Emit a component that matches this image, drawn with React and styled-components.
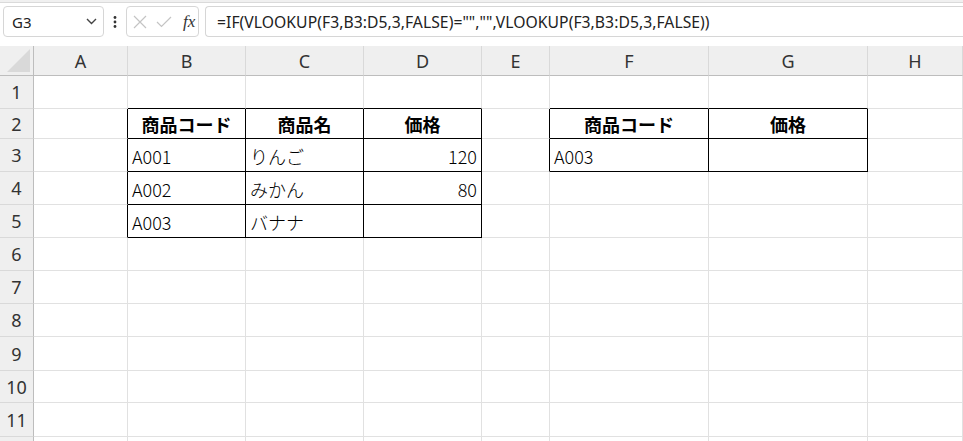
import React from "react";
import styled, { createGlobalStyle } from "styled-components";

const GlobalStyle = createGlobalStyle`
  * { box-sizing: border-box; }
  body {
    margin: 0;
    background: #fff;
    font-family: "Noto Sans", "Liberation Sans", sans-serif;
    overflow: hidden;
  }
`;

const COLS = [
  { key: "", w: "34px" },
  { key: "A", w: "94px" },
  { key: "B", w: "118px" },
  { key: "C", w: "118px" },
  { key: "D", w: "118px" },
  { key: "E", w: "68px" },
  { key: "F", w: "159px" },
  { key: "G", w: "159px" },
  { key: "H", w: "1fr" },
];

// last row is only partly on screen, so its number is left out
const ROWS = [33, 30, 33, 33, 33, 33, 33, 33, 34, 32, 34, 33];
const VISIBLE_LABELS = 11;

const CELLS = {
  B2: { text: "商品コード", head: true },
  C2: { text: "商品名", head: true },
  D2: { text: "価格", head: true },
  B3: { text: "A001" },
  C3: { text: "りんご" },
  D3: { text: "120", num: true },
  B4: { text: "A002" },
  C4: { text: "みかん" },
  D4: { text: "80", num: true },
  B5: { text: "A003" },
  C5: { text: "バナナ" },
  F2: { text: "商品コード", head: true },
  G2: { text: "価格", head: true },
  F3: { text: "A003" },
};

const TABLES = [
  { c1: 2, c2: 4, r1: 2, r2: 5 },
  { c1: 6, c2: 7, r1: 2, r2: 3 },
];

const inTable = (c, r) =>
  TABLES.some((t) => c >= t.c1 && c <= t.c2 && r >= t.r1 && r <= t.r2);

const TopLine = styled.div`
  height: 3px;
  background: #f0f0f0;
  border-bottom: 1px solid #dadada;
`;

const Toolbar = styled.div`
  height: 43px;
  display: flex;
  align-items: flex-start;
  padding: 3px 0 0 3px;
  background: #fff;
`;

const NameBox = styled.div`
  width: 101px;
  height: 31px;
  border: 1px solid #d6d6d6;
  border-radius: 4px;
  background: #fff;
  display: flex;
  align-items: center;
  justify-content: space-between;
  padding: 0 6px 0 8px;
  font-size: 15px;
  color: #222;
`;

const Dots = styled.div`
  width: 22px;
  height: 31px;
  display: flex;
  align-items: center;
  justify-content: center;
`;

const FxBox = styled.div`
  width: 73px;
  height: 31px;
  border: 1px solid #d6d6d6;
  border-radius: 4px;
  background: #fff;
  display: flex;
  align-items: center;
  gap: 9px;
  padding-left: 6px;
`;

const FxLabel = styled.span`
  font-family: "Liberation Serif", "DejaVu Serif", serif;
  font-style: italic;
  font-size: 17px;
  color: #333;
  margin-left: 2px;
`;

const FormulaBox = styled.div`
  flex: 1;
  height: 31px;
  margin-left: 6px;
  border: 1px solid #d6d6d6;
  border-right: none;
  border-radius: 4px 0 0 4px;
  background: #fff;
  display: flex;
  align-items: center;
  padding-left: 11px;
  font-size: 15.7px;
  letter-spacing: 0.05px;
  color: #222;
  white-space: nowrap;
  overflow: hidden;
`;

const Sheet = styled.div`
  display: grid;
  grid-template-columns: ${COLS.map((c) => c.w).join(" ")};
  grid-template-rows: 30px ${ROWS.map((h) => `${h}px`).join(" ")};
  overflow: hidden;
`;

const Corner = styled.div`
  background: #efefef;
  border-right: 1px solid #bdbdbd;
  border-bottom: 1px solid #bdbdbd;
  display: flex;
  align-items: flex-end;
  justify-content: flex-end;
  padding: 0 3px 3px 0;
`;

const ColHead = styled.div`
  background: #efefef;
  border-right: 1px solid #d9d9d9;
  border-bottom: 1px solid #bdbdbd;
  display: flex;
  align-items: center;
  justify-content: center;
  font-size: 18px;
  color: #333;
`;

const RowHead = styled.div`
  background: #efefef;
  border-right: 1px solid #bdbdbd;
  border-bottom: 1px solid #d9d9d9;
  display: flex;
  align-items: center;
  justify-content: center;
  font-size: 18px;
  color: #333;
`;

const Cell = styled.div`
  border-right: 1px solid ${(p) => (p.$rb ? "#000" : "#e1e1e1")};
  border-bottom: 1px solid ${(p) => (p.$bb ? "#000" : "#e1e1e1")};
  display: flex;
  align-items: center;
  justify-content: ${(p) => (p.$head ? "center" : p.$num ? "flex-end" : "flex-start")};
  padding: 1px 4px 0 4px;
  font-family: "Noto Sans CJK JP", "Noto Sans", sans-serif;
  font-size: 18px;
  font-weight: ${(p) => (p.$head ? 700 : 300)};
  color: #000;
  white-space: nowrap;
  overflow: hidden;
`;

const Chevron = () => (
  <svg width="11" height="7" viewBox="0 0 11 7">
    <path d="M1 1l4.5 4.5L10 1" fill="none" stroke="#444" strokeWidth="1.4" />
  </svg>
);

const VDots = () => (
  <svg width="4" height="14" viewBox="0 0 4 14">
    <circle cx="2" cy="2.5" r="1.4" fill="#333" />
    <circle cx="2" cy="7" r="1.4" fill="#333" />
    <circle cx="2" cy="11.5" r="1.4" fill="#333" />
  </svg>
);

const CancelIcon = () => (
  <svg width="14" height="14" viewBox="0 0 14 14">
    <path d="M1 1l12 12M13 1L1 13" stroke="#c4c4c4" strokeWidth="1.2" fill="none" />
  </svg>
);

const CheckIcon = () => (
  <svg width="16" height="12" viewBox="0 0 16 12">
    <path d="M1 6l4.5 4.5L15 1" stroke="#c4c4c4" strokeWidth="1.2" fill="none" />
  </svg>
);

const Triangle = () => (
  <svg width="23" height="23" viewBox="0 0 23 23">
    <path d="M23 0V23H0Z" fill="#d9d9d9" />
  </svg>
);

export default function App() {
  return (
    <>
      <GlobalStyle />
      <TopLine />
      <Toolbar>
        <NameBox>
          <span>G3</span>
          <Chevron />
        </NameBox>
        <Dots>
          <VDots />
        </Dots>
        <FxBox>
          <CancelIcon />
          <CheckIcon />
          <FxLabel>fx</FxLabel>
        </FxBox>
        <FormulaBox>
          =IF(VLOOKUP(F3,B3:D5,3,FALSE)="","",VLOOKUP(F3,B3:D5,3,FALSE))
        </FormulaBox>
      </Toolbar>
      <Sheet>
        <Corner>
          <Triangle />
        </Corner>
        {COLS.slice(1).map((c) => (
          <ColHead key={c.key}>{c.key}</ColHead>
        ))}
        {ROWS.map((_, ri) => {
          const r = ri + 1;
          return (
            <React.Fragment key={r}>
              <RowHead>{r <= VISIBLE_LABELS ? r : ""}</RowHead>
              {COLS.slice(1).map((col, ci) => {
                const c = ci + 1;
                const data = CELLS[`${col.key}${r}`] || {};
                return (
                  <Cell
                    key={col.key}
                    $rb={inTable(c, r) || inTable(c + 1, r)}
                    $bb={inTable(c, r) || inTable(c, r + 1)}
                    $head={data.head}
                    $num={data.num}
                  >
                    {data.text}
                  </Cell>
                );
              })}
            </React.Fragment>
          );
        })}
      </Sheet>
    </>
  );
}
